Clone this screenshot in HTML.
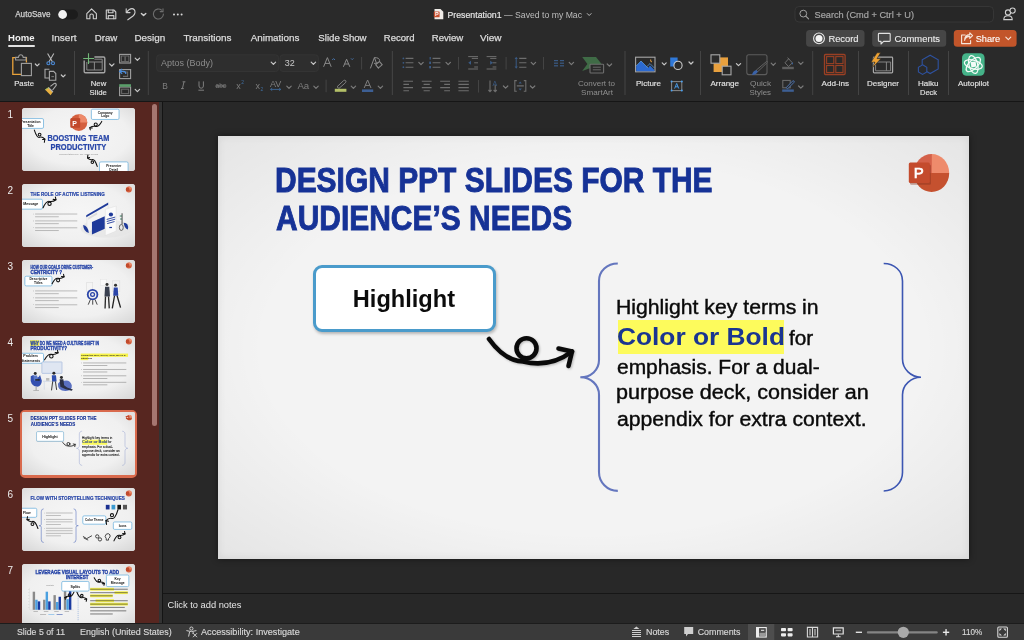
<!DOCTYPE html>
<html><head><meta charset="utf-8">
<style>
*{margin:0;padding:0;box-sizing:border-box}
html,body{width:1024px;height:640px;overflow:hidden;background:#2a2a2a;font-family:"Liberation Sans",sans-serif;position:relative}
body{will-change:transform}
.a{position:absolute;white-space:nowrap}
.t{color:#d6d6d6}
svg{position:absolute;overflow:visible}
#titlebar{left:0;top:0;width:1024px;height:28px;background:#2a2a2a}
#ribbon{left:0;top:47px;width:1024px;height:54px;background:#2a2a2a}
#sidebar{left:0;top:102px;width:159.2px;height:522px;background:#572620}
#canvas{left:163px;top:102px;width:861px;height:491px;background:#282828}
#notes{left:163px;top:594px;width:861px;height:30px;background:#282828}
#status{left:0;top:624px;width:1024px;height:16px;background:#3a3a3a}
.tab{top:32px;font-size:9.8px;color:#d8d8d8;-webkit-text-stroke:0.15px #d8d8d8}
.rl{font-size:8px;color:#dcdcdc;text-align:center}
.dim{color:#8a8a8a}
.sep{position:absolute;width:1px;background:#444}
.chev{position:absolute;width:4px;height:4px;border-right:1.2px solid #bbb;border-bottom:1.2px solid #bbb;transform:rotate(45deg)}
.chev.d{border-color:#777}
.thumb{position:absolute;left:22px;width:113px;height:63px;border-radius:3px;background:#ececec;overflow:hidden}
.num{position:absolute;left:7.6px;font-size:10px;line-height:1;color:#ececec}
</style></head>
<body>
<!-- TITLE BAR -->
<div id="titlebar" class="a"></div>
<svg style="left:0;top:0" width="1024" height="47" font-family="Liberation Sans">
<text x="15.2" y="17" font-size="8.6" fill="#d2d2d2" stroke="#d2d2d2" stroke-width="0.25" textLength="35.3" lengthAdjust="spacingAndGlyphs">AutoSave</text>
<rect x="58" y="9.5" width="20" height="10" rx="5" fill="#1c1c1c"/>
<circle cx="62.6" cy="14.5" r="4.4" fill="#f2f2f2"/>
<g fill="none" stroke="#cfcfcf" stroke-width="1.1" stroke-linejoin="round" stroke-linecap="round">
<path d="M86.8 13.6 L91.6 8.8 L96.4 13.6 L96.4 18.8 L93.3 18.8 L93.3 15.3 Q93.3 14 91.6 14 Q89.9 14 89.9 15.3 L89.9 18.8 L86.8 18.8 Z"/>
<path d="M106.3 10 H113.8 L115.8 12 V18.8 H106.3 Z"/>
<path d="M108.3 10 V12.8 H113 V10"/>
<path d="M108.3 18.8 V15.6 H113.8 V18.8"/>
<path d="M126.2 8.8 V12.6 H130"/>
<path d="M126.6 12.2 Q129.4 8.4 132.2 8.6 Q135.2 9.2 135 12.6 Q134.8 14.4 133 16 L127.8 19.8"/>
<path d="M141.4 13.4 L143.6 15.6 L145.8 13.4" stroke-width="1.4"/>
</g>
<g fill="none" stroke="#6e6e6e" stroke-width="1.1" stroke-linecap="round">
<path d="M163.4 14 A5 5 0 1 1 161.6 10.2"/>
<path d="M163 8.8 V11.6 H160.2"/>
</g>
<g fill="#d8d8d8"><circle cx="174" cy="14.4" r="1"/><circle cx="177.8" cy="14.4" r="1"/><circle cx="181.6" cy="14.4" r="1"/></g>
<path d="M434.5 9 H440.5 L443.3 11.8 V19.2 H434.5 Z" fill="#f0ece8"/>
<rect x="433.8" y="11.5" width="5.8" height="5.8" rx="0.6" fill="#c94f2e"/>
<text x="434.9" y="16.3" font-size="5.5" font-weight="bold" fill="#fff">P</text>
<text x="447.5" y="17.6" font-size="9.5" fill="#e4e4e4" stroke="#e4e4e4" stroke-width="0.2" textLength="54" lengthAdjust="spacingAndGlyphs">Presentation1</text>
<text x="504" y="17.6" font-size="9.5" fill="#bdbdbd" textLength="78" lengthAdjust="spacingAndGlyphs">— Saved to my Mac</text>
<path d="M587 13.3 L589.2 15.5 L591.4 13.3" fill="none" stroke="#bdbdbd" stroke-width="1"/>
<rect x="795" y="6.5" width="198.5" height="15.5" rx="4" fill="#272727" stroke="#3a3a3a" stroke-width="0.8"/>
<circle cx="803.3" cy="13.6" r="3.4" fill="none" stroke="#a0a0a0" stroke-width="1"/>
<path d="M805.8 16.1 L808.6 18.9" stroke="#a0a0a0" stroke-width="1.1" stroke-linecap="round"/>
<text x="814.5" y="17.5" font-size="9.3" fill="#a4a4a4" stroke="#a4a4a4" stroke-width="0.2" textLength="99.5" lengthAdjust="spacingAndGlyphs">Search (Cmd + Ctrl + U)</text>
<g fill="none" stroke="#d0d0d0" stroke-width="1.1">
<circle cx="1008" cy="12.5" r="2.6"/>
<path d="M1003.8 19.6 Q1003.8 15.8 1008 15.8 Q1012.2 15.8 1012.2 19.6 Z"/>
<circle cx="1012.6" cy="10.6" r="2.6" fill="#2a2a2a"/>
</g>
<!-- tabs -->
<g font-size="9.8" fill="#dcdcdc" stroke="#dcdcdc" stroke-width="0.25">
<text x="8" y="40.5" font-weight="bold" fill="#f0f0f0" stroke="none" textLength="26.5" lengthAdjust="spacingAndGlyphs">Home</text>
<text x="51.5" y="40.5" textLength="25" lengthAdjust="spacingAndGlyphs">Insert</text>
<text x="94.7" y="40.5" textLength="22.6" lengthAdjust="spacingAndGlyphs">Draw</text>
<text x="134.5" y="40.5" textLength="30.7" lengthAdjust="spacingAndGlyphs">Design</text>
<text x="183.4" y="40.5" textLength="48" lengthAdjust="spacingAndGlyphs">Transitions</text>
<text x="250.7" y="40.5" textLength="48.7" lengthAdjust="spacingAndGlyphs">Animations</text>
<text x="318.3" y="40.5" textLength="48.3" lengthAdjust="spacingAndGlyphs">Slide Show</text>
<text x="383.8" y="40.5" textLength="30.7" lengthAdjust="spacingAndGlyphs">Record</text>
<text x="431.7" y="40.5" textLength="31.6" lengthAdjust="spacingAndGlyphs">Review</text>
<text x="480" y="40.5" textLength="21.5" lengthAdjust="spacingAndGlyphs">View</text>
</g>
<rect x="8" y="45" width="27" height="2" rx="1" fill="#e2e2e2"/>
<!-- buttons -->
<rect x="806.1" y="30" width="58.4" height="16.8" rx="3.5" fill="#464646"/>
<circle cx="819" cy="38.4" r="5.4" fill="none" stroke="#e8e8e8" stroke-width="1.1"/>
<circle cx="819" cy="38.4" r="3.5" fill="#f4f4f4"/>
<rect x="872.2" y="30" width="74" height="16.8" rx="3.5" fill="#464646"/>
<path d="M879.2 33.4 H889.4 Q890.2 33.4 890.2 34.2 V40.6 Q890.2 41.4 889.4 41.4 H883.6 L881 44 V41.4 H879.2 Q878.4 41.4 878.4 40.6 V34.2 Q878.4 33.4 879.2 33.4 Z" fill="none" stroke="#e0e0e0" stroke-width="1.1" stroke-linejoin="round"/>
<rect x="953.8" y="30" width="62.8" height="16.8" rx="3.5" fill="#c2552a"/>
<g fill="none" stroke="#f6e6dc" stroke-width="1.1" stroke-linejoin="round" stroke-linecap="round">
<path d="M965.2 35 H961.6 V43.6 H970.6 V40.6"/>
<path d="M964.6 40.4 Q965.4 36.4 969.8 36.4 V38.4 L972.6 35.6 L969.8 32.8 V34.6 Q964.6 34.8 964.6 40.4 Z"/>
<path d="M1005.8 37.2 L1008.3 39.7 L1010.8 37.2" stroke="#f6e6dc"/>
</g>
<g font-size="9.6" fill="#ececec" stroke="#ececec" stroke-width="0.12">
<text x="828.4" y="42.4" textLength="30.2" lengthAdjust="spacingAndGlyphs">Record</text>
<text x="894.5" y="42.4" textLength="45.5" lengthAdjust="spacingAndGlyphs">Comments</text>
<text x="975.7" y="42.4" fill="#fff" stroke="#fff" textLength="24.5" lengthAdjust="spacingAndGlyphs">Share</text>
</g>
</svg>

<!-- RIBBON -->
<div id="ribbon" class="a"></div>
<svg style="left:0;top:47px" width="1024" height="54" viewBox="0 47 1024 54" font-family="Liberation Sans">
<!-- separators -->
<g fill="#444">
<rect x="74" y="51" width="1" height="44"/><rect x="147.8" y="51" width="1" height="44"/>
<rect x="391.8" y="51" width="1.1" height="44"/><rect x="624.5" y="51" width="1" height="44"/>
<rect x="700" y="51" width="1" height="44"/><rect x="812.2" y="51" width="1" height="44"/>
<rect x="858" y="51" width="1" height="44"/><rect x="908" y="51" width="1" height="44"/><rect x="948" y="51" width="1" height="44"/>
<rect x="361.1" y="57" width="1" height="12.5"/><rect x="325.6" y="79.7" width="1" height="12.5"/>
<rect x="458" y="57" width="1" height="12.5"/><rect x="505.6" y="57" width="1" height="12.5"/><rect x="543" y="57" width="1" height="12.5"/>
<rect x="478" y="80" width="1" height="12.5"/>
</g>
<!-- chevrons -->
<g fill="none" stroke-width="1.2" stroke-linecap="round" stroke-linejoin="round">
<g stroke="#c8c8c8">
<path d="M35.3 64 L37.2 65.9 L39.1 64"/><path d="M61.3 75 L63.2 76.9 L65.1 75"/>
<path d="M109.6 63.8 L111.8 66 L114 63.8"/><path d="M135.2 58.2 L137.4 60.4 L139.6 58.2"/><path d="M135.2 89.4 L137.4 91.6 L139.6 89.4"/>

<path d="M662.2 62.8 L664.2 64.8 L666.2 62.8"/><path d="M689 62 L691 64 L693 62"/>
<path d="M736.4 63.6 L738.5 65.7 L740.6 63.6"/>
</g>
<g stroke="#7a7a7a">
<path d="M286.8 86.2 L289 88.4 L291.2 86.2"/><path d="M313.8 86.2 L316 88.4 L318.2 86.2"/>
<path d="M351.2 86.2 L353.4 88.4 L355.6 86.2"/><path d="M378.2 86.2 L380.4 88.4 L382.6 86.2"/>
<path d="M418.8 62.4 L421 64.6 L423.2 62.4"/><path d="M446 62.4 L448.2 64.6 L450.4 62.4"/>
<path d="M531.2 62.4 L533.4 64.6 L535.6 62.4"/><path d="M569.2 62.4 L571.4 64.6 L573.6 62.4"/>
<path d="M503.4 86 L505.6 88.2 L507.8 86"/><path d="M530.4 86 L532.6 88.2 L534.8 86"/>
<path d="M607.2 64 L609.4 66.2 L611.6 64"/>
<path d="M771.2 63.2 L773.3 65.3 L775.4 63.2"/>
<path d="M798.6 62.2 L800.8 64.4 L803 62.2"/><path d="M798.6 86 L800.8 88.2 L803 86"/>
</g>
</g>
<!-- Paste -->
<path d="M19 57.6 H12.8 V74.4 H21" fill="none" stroke="#e9a23a" stroke-width="1.3"/>
<path d="M23.4 57.6 H26.4 V62.6" fill="none" stroke="#e9a23a" stroke-width="1.3"/>
<path d="M15.6 60 V57.4 H18.4 Q18.8 54.8 20.8 54.8 Q22.8 54.8 23.2 57.4 H26 V60 Z" fill="#2a2a2a" stroke="#9a9a9a" stroke-width="1.1"/>
<rect x="21.4" y="63.4" width="10" height="12.2" fill="#2a2a2a" stroke="#a0a0a0" stroke-width="1.1"/>
<!-- scissors -->
<g fill="none" stroke-width="1.1"><path d="M47.6 53.4 L52.4 61.8 M53.8 53.4 L49 61.8" stroke="#b8b8b8"/>
<circle cx="48.4" cy="63.2" r="1.5" stroke="#4a8ad8"/><circle cx="53" cy="63.2" r="1.5" stroke="#4a8ad8"/></g>
<!-- copy -->
<g fill="none" stroke="#a8a8a8" stroke-width="1.1"><path d="M49.4 78 H45 V69.2 H49.4"/><path d="M49.4 71.4 H53.6 L55.8 73.6 V80.2 H49.4 Z"/><path d="M51.4 76.6 H54" stroke="#777"/></g>
<!-- brush -->
<path d="M45.2 89.8 L50.6 95.2 L52.8 92 L48.6 87.6 Z" fill="#e8b040"/>
<path d="M48.4 87.4 L53 92 M50.4 86.4 L54 83.6 Q55.6 82.8 56.2 84.2 Q56.6 85.6 55.2 86.6 L52.6 90" fill="none" stroke="#b0b0b0" stroke-width="1.1"/>
<path d="M45.2 89.8 L48.6 87.6" stroke="#9ac060" stroke-width="1"/>
<!-- New slide -->
<path d="M94.4 57 H103.6 Q104.8 57 104.8 58.2 V71.6 Q104.8 72.8 103.6 72.8 H85.4 Q84.2 72.8 84.2 71.6 V60.4" fill="none" stroke="#a4a4a4" stroke-width="1.4"/>
<path d="M86.8 62 V70 H102.2 V59.2 H94.4" fill="none" stroke="#8a8a8a" stroke-width="1"/>
<path d="M88.6 62 H102.2 M94.4 62 V70" fill="none" stroke="#8a8a8a" stroke-width="1"/>
<path d="M88.5 53.2 V64 M83.2 58.5 H94" stroke="#72b878" stroke-width="1.1"/>
<!-- layout / reset / section -->
<g fill="none" stroke="#a0a0a0" stroke-width="1.1">
<rect x="119.6" y="54.4" width="11" height="8.6"/><rect x="121.3" y="56" width="7.6" height="5.4" stroke="#777" stroke-width="0.8"/>
<path d="M125.1 56.4 V61" stroke="#777"/>
<rect x="119.6" y="69.6" width="11" height="9"/><path d="M123 72 H127.6 V76.4 H123" stroke="#666"/>
<rect x="119.6" y="87" width="11" height="8.6"/><rect x="121.6" y="89.2" width="7" height="4.4" stroke="#666"/>
</g>
<path d="M122.2 69 L119.6 71.4 L122.2 73.8 M119.8 71.4 H123.6 Q125.8 71.4 125.8 74" fill="none" stroke="#4a8ad8" stroke-width="1.2"/>
<rect x="119.2" y="84.2" width="11.8" height="2.6" fill="#5a9e6a"/>
<!-- font boxes -->
<rect x="156.6" y="54.8" width="122" height="16.7" rx="3" fill="#2e2e2e" stroke="#363636" stroke-width="0.8"/>
<rect x="280" y="54.8" width="38.4" height="16.7" rx="3" fill="#2e2e2e" stroke="#363636" stroke-width="0.8"/>
<text x="161" y="66" font-size="9" fill="#8c8c8c" textLength="52" lengthAdjust="spacingAndGlyphs">Aptos (Body)</text>
<text x="284.8" y="66" font-size="9" fill="#c8c8c8" textLength="10" lengthAdjust="spacingAndGlyphs">32</text>
<path d="M271.2 62.2 L273.4 64.4 L275.6 62.2 M311.2 62.2 L313.4 64.4 L315.6 62.2" fill="none" stroke="#c8c8c8" stroke-width="1.2" stroke-linecap="round" stroke-linejoin="round"/>
<!-- grow / shrink / clear -->
<g fill="none" stroke="#8a8a8a" stroke-width="1">
<path d="M323.6 66.8 L327.4 57.6 L331.2 66.8 M325 63.4 H329.8"/>
<path d="M343.4 66.8 L346.6 59.2 L349.8 66.8 M344.6 64 H348.6"/>
<path d="M370.4 68.4 L374.4 57.6 L378.4 68.4 M374.4 57.6 Q379.6 57.6 379.6 60.6 Q379.6 63.4 374 63.4"/>
</g>
<path d="M332.2 60 L333.6 58.6 L335 60" fill="none" stroke="#4a7ab8" stroke-width="0.9"/>
<path d="M351 58.4 L352.2 59.6 L353.4 58.4" fill="none" stroke="#4a7ab8" stroke-width="0.9"/>
<rect x="376.4" y="62.6" width="5" height="4.2" transform="rotate(-40 379 64.7)" fill="#2a2a2a" stroke="#8a8a8a" stroke-width="1"/>
<!-- B I U abc x2 -->
<g font-size="9.6" fill="#7e7e7e">
<text x="162.3" y="88.8" textLength="5.6" lengthAdjust="spacingAndGlyphs">B</text>
</g>
<g fill="none" stroke="#7e7e7e" stroke-width="1">
<path d="M182.6 81.8 H185.4 M181 88.6 H183.8 M184 81.8 L182.4 88.6"/>
<path d="M199 81.4 V86 Q199 88.2 201.2 88.2 Q203.4 88.2 203.4 86 V81.4 M198.4 90.2 H204"/>
<path d="M215.4 86 H226.4"/>
</g>
<text x="215.6" y="88.4" font-size="7.4" fill="#7e7e7e" textLength="10.4" lengthAdjust="spacingAndGlyphs">abc</text>
<text x="236.2" y="88.6" font-size="9" fill="#7e7e7e">x</text>
<text x="241.2" y="83.6" font-size="5" fill="#3e6a9a">2</text>
<text x="255.4" y="88.6" font-size="9" fill="#7e7e7e">x</text>
<text x="260.4" y="91.4" font-size="5" fill="#3e6a9a">2</text>
<text x="270" y="87.4" font-size="9.4" fill="#7e7e7e" textLength="11.4" lengthAdjust="spacingAndGlyphs">AV</text>
<path d="M270.6 89.4 H280.8 M272.2 88.2 L270.6 89.4 L272.2 90.6 M279.2 88.2 L280.8 89.4 L279.2 90.6" fill="none" stroke="#3e6a9a" stroke-width="0.9"/>
<text x="297.4" y="88.8" font-size="9.4" fill="#7e7e7e" textLength="11.8" lengthAdjust="spacingAndGlyphs">Aa</text>
<path d="M337 86.8 L343.6 80.6 Q345 79.6 345.8 80.8 Q346.4 81.8 345.4 82.8 L339 88.4 Z" fill="none" stroke="#7e7e7e" stroke-width="1"/>
<rect x="334.8" y="88.8" width="11.6" height="3" fill="#b4c068"/>
<path d="M364.2 88 L367.6 80 L371 88 M365.4 85.4 H369.8" fill="none" stroke="#7e7e7e" stroke-width="1"/>
<rect x="362" y="89.4" width="11.2" height="2.6" fill="#3d5f94"/>
<!-- paragraph -->
<g fill="none" stroke="#6e6e6e" stroke-width="1.1">
<path d="M405.6 58.4 H413.4 M405.6 62.8 H413.4 M405.6 67.2 H413.4"/>
<path d="M432.6 58.4 H440.4 M432.6 62.8 H440.4 M432.6 67.2 H440.4"/>
<path d="M471.8 58.4 H478 M474.2 62.8 H478 M474.2 67 H478 M468.2 69 H478 M468.2 56.6 H478" stroke-width="1"/>
<path d="M490.2 58.4 H496.4 M492.6 62.8 H496.4 M492.6 67 H496.4 M486.6 69 H496.4 M486.6 56.6 H496.4" stroke-width="1"/>
<path d="M519.2 58.4 H526.4 M519.2 62.8 H526.4 M519.2 67.2 H526.4"/>
<path d="M403.4 81.2 H413 M403.4 84.4 H409 M403.4 87.6 H413 M403.4 90.8 H409"/>
<path d="M421.8 81.2 H431.6 M423.6 84.4 H429.8 M421.8 87.6 H431.6 M423.6 90.8 H429.8"/>
<path d="M440.2 81.2 H450 M444.2 84.4 H450 M440.2 87.6 H450 M444.2 90.8 H450"/>
<path d="M458.4 81.2 H468.8 M458.4 84.4 H468.8 M458.4 87.6 H468.8 M458.4 90.8 H468.8"/>
<path d="M490 80.4 V91.6 M488.4 90 L490 91.6 L491.6 90 M495.2 85 V91.6 M493.6 90 L495.2 91.6 L496.8 90"/>
<path d="M516.8 80.6 H514.8 V91.2 H516.8 M523.8 80.6 H525.8 V91.2 H523.8 M516.8 85.9 H523.8"/>
</g>
<g fill="#3a5a84">
<circle cx="403.4" cy="58.4" r="0.9"/><circle cx="403.4" cy="62.8" r="0.9"/><circle cx="403.4" cy="67.2" r="0.9"/>
<rect x="429.6" y="57" width="1.2" height="2.6"/><rect x="429.2" y="61.6" width="1.8" height="2.4"/><rect x="429.2" y="66" width="1.8" height="2.4"/>
<path d="M468.2 62.8 L471 60.8 V64.8 Z"/><path d="M490.2 60.8 L493 62.8 L490.2 64.8 Z"/>
<path d="M516.2 56.8 L514.6 59 H517.8 Z M516.2 68.8 L514.6 66.6 H517.8 Z"/><rect x="515.7" y="58.6" width="1" height="8.4"/>
<rect x="554" y="60" width="4" height="1.2"/><rect x="554" y="62.6" width="4" height="1.2"/><rect x="554" y="65.2" width="4" height="1.2"/>
<rect x="560" y="60" width="4" height="1.2"/><rect x="560" y="62.6" width="4" height="1.2"/><rect x="560" y="65.2" width="4" height="1.2"/>
<path d="M520.2 81.4 L518.6 83.4 H521.8 Z M520.2 90.6 L518.6 88.6 H521.8 Z"/>
</g>
<text x="492.6" y="85.8" font-size="7" fill="#3a5a84">A</text>
<!-- SmartArt -->
<path d="M582.2 57 H596 L601.6 64 L596 66 L582.2 71 L587.4 64 Z" fill="#3f6b46"/>
<rect x="590" y="64.2" width="13.6" height="8.8" rx="0.8" fill="#2a2a2a" stroke="#6e6e6e" stroke-width="1.1"/>
<path d="M592.8 67.2 H600.8 M592.8 69.8 H600.8" stroke="#6e6e6e" stroke-width="0.9"/>
<!-- Picture -->
<rect x="635.6" y="57.2" width="19.4" height="14.6" fill="#2a2a2a" stroke="#a8a8a8" stroke-width="1.1"/>
<path d="M636.2 71.2 V66 L641 61 L648 68 L650 65.6 L654.4 70 V71.2 Z" fill="#2c6ad0"/>
<path d="M636.2 66 L641 61 L648 68 M646.6 66.8 L650 63.6 L654.4 68" fill="none" stroke="#5aa0e8" stroke-width="0.7"/>
<path d="M650.8 59.4 Q650 61 651.8 62" fill="none" stroke="#e09a3a" stroke-width="1.1"/>
<!-- shapes -->
<path d="M670.2 57.4 H677.6 V61 Q673.8 62.6 673.8 66.4 H670.2 Z" fill="#2f78d8"/>
<circle cx="678" cy="65.4" r="4.1" fill="none" stroke="#c8c8c8" stroke-width="1.1"/>
<!-- textbox -->
<rect x="671.6" y="81.6" width="10.2" height="9" fill="none" stroke="#8a8a8a" stroke-width="1"/>
<g fill="#4aa0f0"><circle cx="671.6" cy="81.6" r="1"/><circle cx="681.8" cy="81.6" r="1"/><circle cx="671.6" cy="90.6" r="1"/><circle cx="681.8" cy="90.6" r="1"/></g>
<path d="M674.6 88.6 L676.7 83.4 L678.8 88.6 M675.4 86.8 H678" fill="none" stroke="#4aa0f0" stroke-width="0.9"/>
<!-- arrange -->
<rect x="713.6" y="57.4" width="14.4" height="14.6" fill="#e8a03e"/>
<rect x="711" y="54.8" width="8.8" height="8.4" fill="#2a2a2a" stroke="#a8a8a8" stroke-width="1.1"/>
<rect x="722.2" y="66.2" width="8.8" height="8.6" fill="#2a2a2a" stroke="#a8a8a8" stroke-width="1.1"/>
<!-- quick styles -->
<rect x="746.8" y="54.8" width="20.2" height="19.8" rx="2" fill="none" stroke="#5c5c5c" stroke-width="1.1"/>
<path d="M756.2 70.2 L766.4 61.6 Q767.8 61 767.2 62.6 L757.6 71.8 Z" fill="#2a2a2a" stroke="#6a6a6a" stroke-width="0.9"/>
<path d="M752 75 Q752.6 71.2 756.4 70 L757.8 71.6 Q756.6 75 752 75 Z" fill="#3a62a8"/>
<!-- fill / outline -->
<g fill="none" stroke="#6e6e6e" stroke-width="1"><path d="M785 62.8 L788.6 58.8 L792.4 62.8 L788.6 66.6 Z"/><path d="M787.6 57.6 L789.4 59.6"/></g>
<rect x="782.2" y="66.8" width="11.6" height="2.4" fill="#5e5e5e"/>
<path d="M791.8 62 L793.2 64 L792 64.6 Z" fill="#3a6ab0"/>
<rect x="782.8" y="80.4" width="7.4" height="7.4" fill="none" stroke="#6e6e6e" stroke-width="1"/>
<path d="M786.2 87.6 L792.4 81.2 Q793.4 80.4 794 81 Q794.6 81.8 793.8 82.6 L787.6 88.8 Z" fill="#2a2a2a" stroke="#4a72b0" stroke-width="1"/>
<rect x="782.2" y="89.4" width="11.6" height="2.4" fill="#3d5f94"/>
<!-- add-ins -->
<rect x="824.5" y="54.5" width="20.6" height="20" rx="1" fill="none" stroke="#9a4024" stroke-width="1.3"/>
<g fill="none" stroke="#9a4024" stroke-width="1.1"><rect x="826.6" y="56.6" width="7.2" height="7"/><rect x="835.8" y="56.6" width="7.2" height="7"/><rect x="826.6" y="65.5" width="7.2" height="7"/><rect x="835.8" y="65.5" width="7.2" height="7"/></g>
<!-- designer -->
<rect x="873.4" y="57.2" width="19.2" height="15.6" rx="0.8" fill="none" stroke="#a8a8a8" stroke-width="1.2"/>
<path d="M875.6 62 H890.6 V70.8 H875.6 Z M886.4 62 V70.8" fill="none" stroke="#8c8c8c" stroke-width="0.9"/>
<path d="M877 52.8 L871 62.2 H875 L871.6 68.6 L881 58.6 H877 L880.6 52.8 Z" fill="#eea232" stroke="#2a2a2a" stroke-width="0.6"/>
<!-- haiku -->
<g fill="none" stroke="#2e52a0" stroke-width="1.1">
<path d="M930.2 55.2 L938.2 59.8 V69 L930.2 73.6 L922.2 69 V59.8 Z"/>
<path d="M922.6 64.8 L926.8 67.2 V72 L922.6 74.4 L918.4 72 V67.2 Z" fill="#2a2a2a"/>
</g>
<!-- autopilot -->
<rect x="962" y="53.2" width="22.6" height="22.6" rx="4.5" fill="#45b389"/>
<g fill="none" stroke="#f4fbf7" stroke-width="1.3">
<ellipse cx="973.3" cy="64.5" rx="9.2" ry="4.3" transform="rotate(15 973.3 64.5)"/>
<ellipse cx="973.3" cy="64.5" rx="9.2" ry="4.3" transform="rotate(75 973.3 64.5)"/>
<ellipse cx="973.3" cy="64.5" rx="9.2" ry="4.3" transform="rotate(135 973.3 64.5)"/>
</g>
<path d="M970.6 62 L975.6 61.6 L976.4 66.6 L971.4 67.4 Z" fill="#f4fbf7"/>
<!-- labels -->
<g font-size="8" fill="#e2e2e2" stroke="#e2e2e2" stroke-width="0.15">
<text x="14.2" y="86" textLength="19.8" lengthAdjust="spacingAndGlyphs">Paste</text>
<text x="90.8" y="86" textLength="15.4" lengthAdjust="spacingAndGlyphs">New</text>
<text x="89.6" y="94.7" textLength="17.3" lengthAdjust="spacingAndGlyphs">Slide</text>
<text x="636" y="86" textLength="25" lengthAdjust="spacingAndGlyphs">Picture</text>
<text x="710.5" y="86" textLength="28.5" lengthAdjust="spacingAndGlyphs">Arrange</text>
<text x="821.5" y="86" textLength="27.5" lengthAdjust="spacingAndGlyphs">Add-ins</text>
<text x="867" y="86" textLength="32" lengthAdjust="spacingAndGlyphs">Designer</text>
<text x="918" y="86" textLength="20.5" lengthAdjust="spacingAndGlyphs">Haiku</text>
<text x="920" y="94.7" textLength="17" lengthAdjust="spacingAndGlyphs">Deck</text>
<text x="958" y="86" textLength="31" lengthAdjust="spacingAndGlyphs">Autopilot</text>
</g>
<g font-size="8" fill="#8e8e8e">
<text x="578" y="86" textLength="37" lengthAdjust="spacingAndGlyphs">Convert to</text>
<text x="581" y="94.7" textLength="32" lengthAdjust="spacingAndGlyphs">SmartArt</text>
<text x="750" y="86" textLength="21" lengthAdjust="spacingAndGlyphs">Quick</text>
<text x="749.5" y="94.7" textLength="21.5" lengthAdjust="spacingAndGlyphs">Styles</text>
</g>
</svg>
<div class="a" style="left:0;top:101px;width:1024px;height:1px;background:#161616"></div>

<!-- SIDEBAR -->
<div id="sidebar" class="a"></div>
<div class="a" style="left:159.2px;top:102px;width:2.8px;height:522px;background:#333"></div>
<div class="a" style="left:162px;top:102px;width:1px;height:522px;background:#141414"></div>
<div class="a" style="left:151.5px;top:104px;width:5.5px;height:322px;border-radius:3px;background:#a57670"></div>

<!-- CANVAS -->
<div id="canvas" class="a"></div>
<div class="a" style="left:163px;top:593px;width:861px;height:1px;background:#161616"></div>
<div id="notes" class="a"></div>
<div class="a" style="left:167.5px;top:599.5px;font-size:9.3px;color:#e6e6e6">Click to add notes</div>

<!-- SLIDE -->
<div class="a" style="left:218px;top:136px;width:751px;height:423px;background:#f3f3f3;overflow:hidden;box-shadow:0 0 7px rgba(0,0,0,0.45)">
<div class="a" style="left:0;top:0;width:751px;height:423px;box-shadow:inset 0 0 9px rgba(0,0,0,0.08);background:radial-gradient(ellipse at 50% 50%,rgba(0,0,0,0) 62%,rgba(0,0,0,0.06) 100%);z-index:0"></div>
<div class="a" style="left:-218px;top:-136px;width:1024px;height:640px">
<div class="a" style="left:275.4px;top:162.8px;font-size:34.5px;line-height:1;font-weight:bold;color:#163296;-webkit-text-stroke:0.9px #163296;transform:scaleX(0.868);transform-origin:0 0">DESIGN PPT SLIDES FOR THE</div>
<div class="a" style="left:275.9px;top:200.5px;font-size:34.5px;line-height:1;font-weight:bold;color:#163296;-webkit-text-stroke:0.9px #163296;transform:scaleX(0.868);transform-origin:0 0">AUDIENCE’S NEEDS</div>
<div class="a" style="left:313px;top:265px;width:183px;height:67px;border:3px solid #4a9bcb;border-radius:9px;background:#fff;box-shadow:1px 2px 3px rgba(0,0,0,0.25)"></div>
<div class="a" style="left:352.8px;top:287.5px;font-size:23.6px;line-height:1;font-weight:bold;color:#0c0c0c">Highlight</div>
<svg style="left:0;top:0" width="1024" height="640">
<path d="M617.8 263.5 C607 263.5 599 271 599 281 L599 360 C599 370 591 377.3 580.3 377.3 C591 377.3 599 385 599 394.7 L599 472.2 C599 482 607 490.9 617.8 490.9" fill="none" stroke="#6476be" stroke-width="2.1"/>
<path d="M883.7 263.5 C894.5 263.5 902.5 271 902.5 281 L902.5 359 C902.5 369 911 377.2 921 377.2 C911 377.2 902.5 385 902.5 394.7 L902.5 472.5 C902.5 482 894.5 491 883.7 491" fill="none" stroke="#3c56b2" stroke-width="1.6"/>
<g fill="none" stroke="#0a0a0a" stroke-width="4.6" stroke-linecap="round" stroke-linejoin="round" style="filter:drop-shadow(1px 1px 1px rgba(0,0,0,0.25))">
<path d="M489 339 C499 353 510 361 523 361.5 C541 366 558 362 572 351.5"/>
<circle cx="526.5" cy="348.3" r="10"/>
<path d="M558.5 348.5 L572 351.5 L568.5 366"/>
</g>
</svg>
<div class="a" style="left:617.5px;top:320px;width:166.2px;height:34px;background:#fdfb5c"></div>
<div class="a" style="left:615.6px;top:297.6px;font-size:19.5px;line-height:1;color:#0a0a0a;-webkit-text-stroke:0.4px #0a0a0a;transform:scaleX(1.087);transform-origin:0 0">Highlight key terms in</div>
<div class="a" style="left:616.8px;top:325.3px;font-size:24.6px;line-height:1;font-weight:bold;color:#1a3591;transform:scaleX(1.069);transform-origin:0 0">Color or Bold</div>
<div class="a" style="left:788.5px;top:329.1px;font-size:19.5px;line-height:1;color:#0a0a0a;-webkit-text-stroke:0.4px #0a0a0a;transform:scaleX(1.066);transform-origin:0 0">for</div>
<div class="a" style="left:616.6px;top:358.1px;font-size:19.5px;line-height:1;color:#0a0a0a;-webkit-text-stroke:0.4px #0a0a0a;transform:scaleX(1.075);transform-origin:0 0">emphasis. For a dual-</div>
<div class="a" style="left:615.6px;top:383.2px;font-size:19.5px;line-height:1;color:#0a0a0a;-webkit-text-stroke:0.4px #0a0a0a;transform:scaleX(1.105);transform-origin:0 0">purpose deck, consider an</div>
<div class="a" style="left:616.6px;top:409.6px;font-size:19.5px;line-height:1;color:#0a0a0a;-webkit-text-stroke:0.4px #0a0a0a;transform:scaleX(1.086);transform-origin:0 0">appendix for extra context.</div>
<svg style="left:0;top:0" width="1024" height="640">
<defs><clipPath id="pc"><ellipse cx="931.6" cy="173" rx="17.6" ry="19"/></clipPath></defs>
<g clip-path="url(#pc)">
<rect x="912" y="153" width="20" height="20" fill="#d4614a"/>
<rect x="931.8" y="153" width="20" height="20" fill="#ee8b6c"/>
<rect x="912" y="173" width="40" height="20" fill="#c5512f"/>
</g>
<rect x="910" y="164.5" width="21" height="20.3" rx="1.5" fill="#8a3420" opacity="0.45"/>
<rect x="908.8" y="162.6" width="21" height="20.3" rx="1.5" fill="#c44b2d"/>
<text x="913.8" y="178.2" font-family="Liberation Sans" font-size="15" fill="#fff" stroke="#fff" stroke-width="0.6">P</text>
</svg>


</div></div>

<svg width="0" height="0" style="position:absolute"><defs><radialGradient id="tbg" cx="50%" cy="45%" r="75%"><stop offset="0" stop-color="#f6f6f6"/><stop offset="0.6" stop-color="#f0f0f0"/><stop offset="1" stop-color="#d6d6d6"/></radialGradient></defs></svg><div class="thumb" style="top:108px;"><svg width="113" height="63" viewBox="0 0 751 423" preserveAspectRatio="none" style="position:absolute;left:0;top:0" font-family="Liberation Sans"><rect width="751" height="423" fill="url(#tbg)"/><circle cx="377.5" cy="97.7" r="56.5" fill="#d4603f"/><path d="M377.5 41.2 A56.5 56.5 0 0 1 434.0 97.7 H377.5 Z" fill="#ee8a6a"/><rect x="323.825" y="69.45" width="62.150000000000006" height="59.325" rx="2" fill="#c04a2c"/><rect x="322" y="70" width="64" height="62" rx="5" fill="#c2492b"/><text x="334" y="120" font-size="46" font-weight="bold" fill="#fff">P</text><rect x="461" y="8" width="184" height="69" rx="9" fill="#fff" stroke="#6ab0dc" stroke-width="5"/><text x="553.0" y="37.55" font-size="22" font-weight="bold" fill="#111" text-anchor="middle">Company</text><text x="553.0" y="62.849999999999994" font-size="22" font-weight="bold" fill="#111" text-anchor="middle">Logo</text><rect x="-30" y="71" width="173" height="66" rx="9" fill="#fff" stroke="#6ab0dc" stroke-width="5"/><text x="56.5" y="99.05" font-size="22" font-weight="bold" fill="#111" text-anchor="middle">Presentation</text><text x="56.5" y="124.35" font-size="22" font-weight="bold" fill="#111" text-anchor="middle">Title</text><g fill="none" stroke="#111" stroke-width="7" stroke-linecap="round" stroke-linejoin="round"><path d="M82 148 Q99.5 202.9 117.0 196.8 T152 209"/><circle cx="117.0" cy="178.5" r="9.1"/><path d="M136.6 212.05 L152 209 L148.5 230.35"/></g><g fill="none" stroke="#111" stroke-width="7" stroke-linecap="round" stroke-linejoin="round"><path d="M530 90 Q510.0 127.80000000000001 490.0 123.6 T450 132"/><circle cx="490.0" cy="111.0" r="10.4"/><path d="M467.6 134.1 L450 132 L454.0 146.7"/></g><g fill="none" stroke="#111" stroke-width="7" stroke-linecap="round" stroke-linejoin="round"><path d="M500 392 Q483.75 340.7 467.5 346.4 T435 335"/><circle cx="467.5" cy="363.5" r="8.450000000000001"/><path d="M449.3 332.15 L435 335 L438.25 315.05"/></g><rect x="515" y="362" width="190" height="78" rx="9" fill="#fff" stroke="#6ab0dc" stroke-width="5"/><text x="610.0" y="396.05" font-size="22" font-weight="bold" fill="#111" text-anchor="middle">Presenter</text><text x="610.0" y="421.35" font-size="22" font-weight="bold" fill="#111" text-anchor="middle">Detail</text><text x="170" y="220" font-size="60" font-weight="bold" fill="#2846a8" stroke="#2846a8" stroke-width="1.6" textLength="410" lengthAdjust="spacingAndGlyphs">BOOSTING TEAM</text><text x="189" y="282" font-size="60" font-weight="bold" fill="#2846a8" stroke="#2846a8" stroke-width="1.6" textLength="371" lengthAdjust="spacingAndGlyphs">PRODUCTIVITY</text><text x="247" y="317" font-size="14" fill="#888" textLength="259" lengthAdjust="spacingAndGlyphs">Presentation by: Mr. John Lewis</text></svg></div>
<div class="num" style="top:109.6px">1</div>
<div class="thumb" style="top:184px;"><svg width="113" height="63" viewBox="0 0 751 423" preserveAspectRatio="none" style="position:absolute;left:0;top:0" font-family="Liberation Sans"><rect width="751" height="423" fill="url(#tbg)"/><circle cx="710" cy="36.5" r="20" fill="#d4603f"/><path d="M710 16.5 A20 20 0 0 1 730 36.5 H710 Z" fill="#ee8a6a"/><rect x="691.0" y="26.5" width="22.0" height="21.0" rx="2" fill="#c04a2c"/><text x="57" y="80" font-size="40" font-weight="bold" fill="#2846a8" stroke="#2846a8" stroke-width="1.6" textLength="493" lengthAdjust="spacingAndGlyphs">THE ROLE OF ACTIVE LISTENING</text><rect x="-40" y="102" width="176" height="67" rx="9" fill="#fff" stroke="#6ab0dc" stroke-width="5"/><text x="48.0" y="143.9" font-size="24" font-weight="bold" fill="#111" text-anchor="middle">y Message</text><g fill="none" stroke="#111" stroke-width="7" stroke-linecap="round" stroke-linejoin="round"><path d="M140 160 Q161.5 111.4 183.0 116.8 T226 106"/><circle cx="183.0" cy="133.0" r="11.18"/><path d="M207.07999999999998 103.3 L226 106 L221.7 87.1"/></g><circle cx="77" cy="201.34" r="2.2" fill="#777"/><rect x="87" y="198.56" width="280.28" height="5.930666666666667" fill="#888" opacity="0.6"/><rect x="87" y="217.09333333333333" width="157.3" height="5.930666666666667" fill="#888" opacity="0.6"/><circle cx="77" cy="247.67333333333335" r="2.2" fill="#777"/><rect x="87" y="244.89333333333335" width="280.28" height="5.930666666666667" fill="#888" opacity="0.6"/><rect x="87" y="263.4266666666667" width="157.3" height="5.930666666666667" fill="#888" opacity="0.6"/><circle cx="77" cy="294.00666666666666" r="2.2" fill="#777"/><rect x="87" y="291.2266666666667" width="280.28" height="5.930666666666667" fill="#888" opacity="0.6"/><rect x="87" y="309.76000000000005" width="157.3" height="5.930666666666667" fill="#888" opacity="0.6"/><g>
<ellipse cx="560" cy="300" rx="170" ry="60" fill="#e4e4e4" opacity="0.7"/>
<path d="M431 217 L572 136 L572 251 L431 331 Z" fill="#f4f4f4" stroke="#d8d8d8" stroke-width="3"/>
<path d="M427 209 L573 124 L573 140 L427 224 Z" fill="#1f3a9a"/>
<path d="M440 225 L500 190 L500 205 L440 240 Z" fill="#ddd"/>
<path d="M465 255 L550 217 L550 300 L465 339 Z" fill="#1f3a9a"/>
<path d="M554 170 L626 148 L626 316 L554 346 Z" fill="#fafafa" stroke="#dcdcdc" stroke-width="3"/>
<circle cx="591" cy="205" r="14" fill="#1f3a9a"/>
<path d="M563 238 L620 222 M563 252 L620 236 M566 266 L615 252" stroke="#1f3a9a" stroke-width="6"/>
<rect x="580" y="288" width="18" height="8" fill="#1f3a9a"/>
<path d="M406 275 Q440 280 444 329 Q410 320 406 275 Z" fill="#1f3a9a"/>
<path d="M665 197 V272" stroke="#555" stroke-width="7"/><path d="M665 215 H650 M665 235 H652" stroke="#2a6a50" stroke-width="6"/>
<ellipse cx="660" cy="292" rx="13" ry="20" fill="none" stroke="#555" stroke-width="6"/>
<path d="M676 260 Q712 262 704 306 Q680 300 676 260 Z" fill="#1f3a9a"/>
</g></svg></div>
<div class="num" style="top:185.6px">2</div>
<div class="thumb" style="top:260px;"><svg width="113" height="63" viewBox="0 0 751 423" preserveAspectRatio="none" style="position:absolute;left:0;top:0" font-family="Liberation Sans"><rect width="751" height="423" fill="url(#tbg)"/><circle cx="710" cy="36.5" r="20" fill="#d4603f"/><path d="M710 16.5 A20 20 0 0 1 730 36.5 H710 Z" fill="#ee8a6a"/><rect x="691.0" y="26.5" width="22.0" height="21.0" rx="2" fill="#c04a2c"/><text x="57" y="60" font-size="38" font-weight="bold" fill="#2846a8" stroke="#2846a8" stroke-width="2.6" textLength="415" lengthAdjust="spacingAndGlyphs">HOW OUR GOALS DRIVE CUSTOMER-</text><text x="57" y="94" font-size="38" font-weight="bold" fill="#2846a8" stroke="#2846a8" stroke-width="2.6" textLength="209" lengthAdjust="spacingAndGlyphs">CENTRICITY ?</text><rect x="19" y="109" width="180" height="65" rx="9" fill="#fff" stroke="#6ab0dc" stroke-width="5"/><text x="109.0" y="136.54999999999998" font-size="22" font-weight="bold" fill="#111" text-anchor="middle">Descriptive</text><text x="109.0" y="161.84999999999997" font-size="22" font-weight="bold" fill="#111" text-anchor="middle">Titles</text><g fill="none" stroke="#111" stroke-width="7" stroke-linecap="round" stroke-linejoin="round"><path d="M200 160 Q220.0 117.69999999999999 240.0 122.4 T280 113"/><circle cx="240.0" cy="136.5" r="10.4"/><path d="M262.4 110.65 L280 113 L276.0 96.55"/></g><circle cx="77" cy="207.4" r="2.2" fill="#777"/><rect x="87" y="204.6" width="280.28" height="5.973333333333334" fill="#888" opacity="0.6"/><rect x="87" y="223.26666666666665" width="157.3" height="5.973333333333334" fill="#888" opacity="0.6"/><circle cx="77" cy="254.06666666666666" r="2.2" fill="#777"/><rect x="87" y="251.26666666666665" width="280.28" height="5.973333333333334" fill="#888" opacity="0.6"/><rect x="87" y="269.93333333333334" width="157.3" height="5.973333333333334" fill="#888" opacity="0.6"/><circle cx="77" cy="300.7333333333333" r="2.2" fill="#777"/><rect x="87" y="297.93333333333334" width="280.28" height="5.973333333333334" fill="#888" opacity="0.6"/><rect x="87" y="316.6" width="157.3" height="5.973333333333334" fill="#888" opacity="0.6"/><g>
<rect x="430" y="150" width="40" height="60" fill="none" stroke="#ddd" stroke-width="4"/><rect x="520" y="130" width="40" height="40" fill="#fafafa" stroke="#e0e0e0" stroke-width="3"/><rect x="600" y="140" width="50" height="70" fill="none" stroke="#ddd" stroke-width="4"/>
<circle cx="469" cy="232" r="38" fill="#2a44a8"/><circle cx="469" cy="232" r="26" fill="#f0f0f0"/><circle cx="469" cy="232" r="17" fill="#2a44a8"/><circle cx="469" cy="232" r="8" fill="#f0f0f0"/>
<path d="M440 300 L455 265 M500 300 L485 265 M470 300 L470 270" stroke="#333" stroke-width="6"/>
<circle cx="565" cy="165" r="10" fill="#333"/><path d="M552 180 H580 L585 245 H548 Z" fill="#3a4050"/><path d="M555 245 L552 325 M575 245 L580 325" stroke="#2a2a2a" stroke-width="9"/>
<circle cx="622" cy="170" r="10" fill="#333"/><path d="M610 185 H636 L640 240 H606 Z" fill="#2a44a8"/><path d="M615 240 L600 325 M632 240 L655 320" stroke="#222" stroke-width="9"/>
</g></svg></div>
<div class="num" style="top:261.6px">3</div>
<div class="thumb" style="top:336px;"><svg width="113" height="63" viewBox="0 0 751 423" preserveAspectRatio="none" style="position:absolute;left:0;top:0" font-family="Liberation Sans"><rect width="751" height="423" fill="url(#tbg)"/><circle cx="710" cy="36.5" r="20" fill="#d4603f"/><path d="M710 16.5 A20 20 0 0 1 730 36.5 H710 Z" fill="#ee8a6a"/><rect x="691.0" y="26.5" width="22.0" height="21.0" rx="2" fill="#c04a2c"/><rect x="54" y="28" width="60" height="38" fill="#f6f24a"/><text x="57" y="63" font-size="38" font-weight="bold" fill="#2846a8" stroke="#2846a8" stroke-width="2.6" textLength="455" lengthAdjust="spacingAndGlyphs">WHY DO WE NEED A CULTURE SHIFT IN</text><text x="57" y="96" font-size="38" font-weight="bold" fill="#2846a8" stroke="#2846a8" stroke-width="2.6" textLength="242" lengthAdjust="spacingAndGlyphs">PRODUCTIVITY?</text><rect x="-30" y="116" width="173" height="67" rx="9" fill="#fff" stroke="#6ab0dc" stroke-width="5"/><text x="56.5" y="144.1" font-size="24" font-weight="bold" fill="#111" text-anchor="middle">Problem</text><text x="56.5" y="171.7" font-size="24" font-weight="bold" fill="#111" text-anchor="middle">Statements</text><g fill="none" stroke="#111" stroke-width="7" stroke-linecap="round" stroke-linejoin="round"><path d="M150 160 Q172.5 117.69999999999999 195.0 122.4 T240 113"/><circle cx="195.0" cy="136.5" r="11.700000000000001"/><path d="M220.2 110.65 L240 113 L235.5 96.55"/></g><rect x="132" y="174" width="134" height="77" rx="4" fill="#dfe6f2" stroke="#9ab0d8" stroke-width="4"/><g>
<path d="M58 270 Q50 335 100 340 Q130 338 132 300 L120 262 Q100 300 75 262 Z" fill="#3550b0"/>
<rect x="90" y="340" width="8" height="26" fill="#aaa"/><rect x="75" y="364" width="38" height="5" fill="#aaa"/>
<circle cx="88" cy="252" r="10" fill="#2a2a2a"/><path d="M75 265 H100 L108 300 H80 Z" fill="#5a78c8"/><rect x="88" y="290" width="30" height="10" fill="#222"/>
<rect x="140" y="300" width="80" height="7" fill="#cfd8e6"/><path d="M148 307 V360 M212 307 V360" stroke="#cfd8e6" stroke-width="5"/>
<rect x="160" y="282" width="22" height="18" fill="#bbb"/>
<circle cx="212" cy="250" r="10" fill="#2a2a2a"/><path d="M198 263 H226 L230 305 H200 Z" fill="#2f4fb0"/><path d="M204 305 L196 365 M222 305 L230 362" stroke="#444" stroke-width="7"/>
<path d="M239 320 Q236 370 290 369 Q335 366 331 330 Q320 292 280 300 Q250 300 239 320 Z" fill="#5a70c0"/>
<circle cx="262" cy="278" r="10" fill="#2a2a2a"/><path d="M250 290 H275 L280 330 L300 345 L338 360 L330 368 L290 358 L255 340 Z" fill="#2a2f45"/>
</g><rect x="390" y="118" width="315" height="22" fill="#f6f24a"/><rect x="390" y="140" width="50" height="22" fill="#f6f24a"/><text x="392" y="136" font-size="17" font-weight="bold" fill="#222" textLength="300" lengthAdjust="spacingAndGlyphs">Follow the WHY, WHAT, HOW, WHAT IF</text><text x="392" y="157" font-size="17" font-weight="bold" fill="#222">Structure</text><circle cx="396" cy="180.785" r="2.2" fill="#777"/><rect x="406" y="178.19" width="287.14" height="5.5360000000000005" fill="#777" opacity="0.6"/><rect x="406" y="195.49" width="161.15" height="5.5360000000000005" fill="#777" opacity="0.6"/><circle cx="396" cy="224.03500000000003" r="2.2" fill="#777"/><rect x="406" y="221.44000000000003" width="287.14" height="5.5360000000000005" fill="#777" opacity="0.6"/><rect x="406" y="238.74000000000004" width="161.15" height="5.5360000000000005" fill="#777" opacity="0.6"/><circle cx="396" cy="267.2850000000001" r="2.2" fill="#777"/><rect x="406" y="264.69000000000005" width="287.14" height="5.5360000000000005" fill="#777" opacity="0.6"/><rect x="406" y="281.99000000000007" width="161.15" height="5.5360000000000005" fill="#777" opacity="0.6"/><circle cx="396" cy="310.5350000000001" r="2.2" fill="#777"/><rect x="406" y="307.94000000000005" width="287.14" height="5.5360000000000005" fill="#777" opacity="0.6"/><rect x="406" y="325.24000000000007" width="161.15" height="5.5360000000000005" fill="#777" opacity="0.6"/></svg></div>
<div class="num" style="top:337.6px">4</div>
<div class="a" style="left:19.8px;top:410px;width:117.4px;height:67.6px;border:2.4px solid #d96a4d;border-radius:5px;background:#d96a4d"></div>
<div class="thumb" style="top:412px;top:412.4px;left:22.2px;width:112.8px;height:62.9px;border-radius:2px"><div class="a" style="left:0;top:0;width:751px;height:423px;transform:scale(0.15047);transform-origin:0 0;background:radial-gradient(ellipse at 50% 45%,#f6f6f6 0%,#f0f0f0 60%,#d8d8d8 100%)"><div class="a" style="left:-218px;top:-136px;width:1024px;height:640px"><div class="a" style="left:275.4px;top:162.8px;font-size:34.5px;line-height:1;font-weight:bold;color:#163296;-webkit-text-stroke:0.9px #163296;transform:scaleX(0.868);transform-origin:0 0">DESIGN PPT SLIDES FOR THE</div>
<div class="a" style="left:275.9px;top:200.5px;font-size:34.5px;line-height:1;font-weight:bold;color:#163296;-webkit-text-stroke:0.9px #163296;transform:scaleX(0.868);transform-origin:0 0">AUDIENCE’S NEEDS</div>
<div class="a" style="left:313px;top:265px;width:183px;height:67px;border:3px solid #4a9bcb;border-radius:9px;background:#fff;box-shadow:1px 2px 3px rgba(0,0,0,0.25)"></div>
<div class="a" style="left:352.8px;top:287.5px;font-size:23.6px;line-height:1;font-weight:bold;color:#0c0c0c">Highlight</div>
<svg style="left:0;top:0" width="1024" height="640">
<path d="M617.8 263.5 C607 263.5 599 271 599 281 L599 360 C599 370 591 377.3 580.3 377.3 C591 377.3 599 385 599 394.7 L599 472.2 C599 482 607 490.9 617.8 490.9" fill="none" stroke="#6476be" stroke-width="2.1"/>
<path d="M883.7 263.5 C894.5 263.5 902.5 271 902.5 281 L902.5 359 C902.5 369 911 377.2 921 377.2 C911 377.2 902.5 385 902.5 394.7 L902.5 472.5 C902.5 482 894.5 491 883.7 491" fill="none" stroke="#3c56b2" stroke-width="1.6"/>
<g fill="none" stroke="#0a0a0a" stroke-width="4.6" stroke-linecap="round" stroke-linejoin="round" style="filter:drop-shadow(1px 1px 1px rgba(0,0,0,0.25))">
<path d="M489 339 C499 353 510 361 523 361.5 C541 366 558 362 572 351.5"/>
<circle cx="526.5" cy="348.3" r="10"/>
<path d="M558.5 348.5 L572 351.5 L568.5 366"/>
</g>
</svg>
<div class="a" style="left:617.5px;top:320px;width:166.2px;height:34px;background:#fdfb5c"></div>
<div class="a" style="left:615.6px;top:297.6px;font-size:19.5px;line-height:1;color:#0a0a0a;-webkit-text-stroke:0.4px #0a0a0a;transform:scaleX(1.087);transform-origin:0 0">Highlight key terms in</div>
<div class="a" style="left:616.8px;top:325.3px;font-size:24.6px;line-height:1;font-weight:bold;color:#1a3591;transform:scaleX(1.069);transform-origin:0 0">Color or Bold</div>
<div class="a" style="left:788.5px;top:329.1px;font-size:19.5px;line-height:1;color:#0a0a0a;-webkit-text-stroke:0.4px #0a0a0a;transform:scaleX(1.066);transform-origin:0 0">for</div>
<div class="a" style="left:616.6px;top:358.1px;font-size:19.5px;line-height:1;color:#0a0a0a;-webkit-text-stroke:0.4px #0a0a0a;transform:scaleX(1.075);transform-origin:0 0">emphasis. For a dual-</div>
<div class="a" style="left:615.6px;top:383.2px;font-size:19.5px;line-height:1;color:#0a0a0a;-webkit-text-stroke:0.4px #0a0a0a;transform:scaleX(1.105);transform-origin:0 0">purpose deck, consider an</div>
<div class="a" style="left:616.6px;top:409.6px;font-size:19.5px;line-height:1;color:#0a0a0a;-webkit-text-stroke:0.4px #0a0a0a;transform:scaleX(1.086);transform-origin:0 0">appendix for extra context.</div>
<svg style="left:0;top:0" width="1024" height="640">
<defs><clipPath id="pc2"><ellipse cx="931.6" cy="173" rx="17.6" ry="19"/></clipPath></defs>
<g clip-path="url(#pc2)">
<rect x="912" y="153" width="20" height="20" fill="#d4614a"/>
<rect x="931.8" y="153" width="20" height="20" fill="#ee8b6c"/>
<rect x="912" y="173" width="40" height="20" fill="#c5512f"/>
</g>
<rect x="910" y="164.5" width="21" height="20.3" rx="1.5" fill="#8a3420" opacity="0.45"/>
<rect x="908.8" y="162.6" width="21" height="20.3" rx="1.5" fill="#c44b2d"/>
<text x="913.8" y="178.2" font-family="Liberation Sans" font-size="15" fill="#fff" stroke="#fff" stroke-width="0.6">P</text>
</svg>

</div></div></div>
<div class="num" style="top:413.6px">5</div>
<div class="thumb" style="top:488px;"><svg width="113" height="63" viewBox="0 0 751 423" preserveAspectRatio="none" style="position:absolute;left:0;top:0" font-family="Liberation Sans"><rect width="751" height="423" fill="url(#tbg)"/><circle cx="710" cy="36.5" r="20" fill="#d4603f"/><path d="M710 16.5 A20 20 0 0 1 730 36.5 H710 Z" fill="#ee8a6a"/><rect x="691.0" y="26.5" width="22.0" height="21.0" rx="2" fill="#c04a2c"/><text x="57" y="80" font-size="40" font-weight="bold" fill="#2846a8" stroke="#2846a8" stroke-width="1.6" textLength="626" lengthAdjust="spacingAndGlyphs">FLOW WITH STORYTELLING TECHNIQUES</text><rect x="-60" y="136" width="158" height="61" rx="9" fill="#fff" stroke="#6ab0dc" stroke-width="5"/><text x="19.0" y="174.2" font-size="22" font-weight="bold" fill="#111" text-anchor="middle">al Flow</text><g fill="none" stroke="#111" stroke-width="7" stroke-linecap="round" stroke-linejoin="round"><path d="M106 272 Q87.75 218.9 69.5 224.8 T33 213"/><circle cx="69.5" cy="242.5" r="9.49"/><path d="M49.06 210.05 L33 213 L36.65 192.35"/></g><path d="M144 140 Q128 140 128 160 V245 Q128 253 113 253 Q128 253 128 262 V346 Q128 366 144 366" fill="none" stroke="#5a74c0" stroke-width="4"/><path d="M343 140 Q359 140 359 160 V245 Q359 253 374 253 Q359 253 359 262 V346 Q359 366 343 366" fill="none" stroke="#5a74c0" stroke-width="4"/><circle cx="149" cy="167.67142857142858" r="2.2" fill="#777"/><rect x="159" y="165.1142857142857" width="177.38" height="5.455238095238095" fill="#888" opacity="0.6"/><rect x="159" y="182.16190476190474" width="99.55000000000001" height="5.455238095238095" fill="#888" opacity="0.6"/><circle cx="149" cy="210.29047619047617" r="2.2" fill="#777"/><rect x="159" y="207.7333333333333" width="177.38" height="5.455238095238095" fill="#888" opacity="0.6"/><rect x="159" y="224.78095238095233" width="177.38" height="5.455238095238095" fill="#888" opacity="0.6"/><rect x="159" y="241.82857142857137" width="99.55000000000001" height="5.455238095238095" fill="#888" opacity="0.6"/><circle cx="149" cy="269.9571428571428" r="2.2" fill="#777"/><rect x="159" y="267.3999999999999" width="177.38" height="5.455238095238095" fill="#888" opacity="0.6"/><rect x="159" y="284.44761904761896" width="177.38" height="5.455238095238095" fill="#888" opacity="0.6"/><rect x="159" y="301.495238095238" width="177.38" height="5.455238095238095" fill="#888" opacity="0.6"/><rect x="159" y="318.54285714285703" width="99.55000000000001" height="5.455238095238095" fill="#888" opacity="0.6"/><rect x="557" y="113" width="25" height="31" fill="#1a3090"/><rect x="595" y="113" width="25" height="31" fill="#3a9ad0"/><rect x="634" y="113" width="24" height="31" fill="#111"/><rect x="671" y="113" width="27" height="31" fill="#555"/><rect x="404" y="187" width="153" height="56" rx="9" fill="#fff" stroke="#6ab0dc" stroke-width="5"/><text x="480.5" y="222.0" font-size="20" font-weight="bold" fill="#111" text-anchor="middle">Color Theme</text><g fill="none" stroke="#111" stroke-width="7" stroke-linecap="round" stroke-linejoin="round"><path d="M638 146 Q618.0 211.7 598.0 204.4 T558 219"/><circle cx="598.0" cy="182.5" r="10.4"/><path d="M575.6 222.65 L558 219 L562.0 244.55"/></g><rect x="607" y="228" width="123" height="50" rx="9" fill="#fff" stroke="#6ab0dc" stroke-width="5"/><text x="668.5" y="260.0" font-size="20" font-weight="bold" fill="#111" text-anchor="middle">Icons</text><g fill="none" stroke="#333" stroke-width="6"><path d="M405 325 L430 340 L465 320 M410 335 L440 350"/><circle cx="500" cy="325" r="11"/><circle cx="518" cy="345" r="11"/><path d="M560 350 V340 Q545 325 560 310 Q575 300 585 315 Q590 330 575 340 V350 Z"/></g><g fill="none" stroke="#111" stroke-width="7" stroke-linecap="round" stroke-linejoin="round"><path d="M611 355 Q629.5 312.7 648.0 317.4 T685 308"/><circle cx="648.0" cy="331.5" r="9.620000000000001"/><path d="M668.72 305.65 L685 308 L681.3 291.55"/></g></svg></div>
<div class="num" style="top:489.6px">6</div>
<div class="thumb" style="top:564px;"><svg width="113" height="63" viewBox="0 0 751 423" preserveAspectRatio="none" style="position:absolute;left:0;top:0" font-family="Liberation Sans"><rect width="751" height="423" fill="url(#tbg)"/><circle cx="710" cy="36.5" r="20" fill="#d4603f"/><path d="M710 16.5 A20 20 0 0 1 730 36.5 H710 Z" fill="#ee8a6a"/><rect x="691.0" y="26.5" width="22.0" height="21.0" rx="2" fill="#c04a2c"/><text x="90" y="67" font-size="38" font-weight="bold" fill="#2846a8" stroke="#2846a8" stroke-width="2.6" textLength="555" lengthAdjust="spacingAndGlyphs">LEVERAGE VISUAL LAYOUTS TO ADD</text><text x="292" y="100" font-size="38" font-weight="bold" fill="#2846a8" stroke="#2846a8" stroke-width="2.6" textLength="150" lengthAdjust="spacingAndGlyphs">INTEREST</text><rect x="561" y="74" width="149" height="78" rx="9" fill="#fff" stroke="#6ab0dc" stroke-width="5"/><text x="635.5" y="108.05" font-size="22" font-weight="bold" fill="#111" text-anchor="middle">Key</text><text x="635.5" y="133.35" font-size="22" font-weight="bold" fill="#111" text-anchor="middle">Message</text><g fill="none" stroke="#111" stroke-width="7" stroke-linecap="round" stroke-linejoin="round"><path d="M480 92 Q497.0 126.2 514.0 122.4 T548 130"/><circle cx="514.0" cy="111.0" r="8.84"/><path d="M533.04 131.9 L548 130 L544.6 143.3"/></g><text x="162" y="148" font-size="11" fill="#777">Chart Title</text><path d="M50 160 V308" stroke="#ccc" stroke-width="2"/><rect x="42" y="170" width="6" height="2" fill="#aaa"/><rect x="42" y="190" width="6" height="2" fill="#aaa"/><rect x="42" y="210" width="6" height="2" fill="#aaa"/><rect x="42" y="230" width="6" height="2" fill="#aaa"/><rect x="42" y="250" width="6" height="2" fill="#aaa"/><rect x="42" y="270" width="6" height="2" fill="#aaa"/><rect x="42" y="290" width="6" height="2" fill="#aaa"/><rect x="71" y="186" width="16" height="122" fill="#8a8a8a"/><rect x="88" y="240" width="16" height="68" fill="#4aa0e0"/><rect x="105" y="251" width="16" height="57" fill="#1a3aa0"/><rect x="140" y="240" width="16" height="68" fill="#8a8a8a"/><rect x="157" y="186" width="16" height="122" fill="#4aa0e0"/><rect x="174" y="251" width="16" height="57" fill="#1a3aa0"/><rect x="209" y="209" width="16" height="99" fill="#8a8a8a"/><rect x="226" y="255" width="16" height="53" fill="#4aa0e0"/><rect x="243" y="220" width="16" height="88" fill="#1a3aa0"/><rect x="278" y="170" width="16" height="138" fill="#8a8a8a"/><rect x="295" y="236" width="16" height="72" fill="#4aa0e0"/><rect x="312" y="182" width="16" height="126" fill="#1a3aa0"/><line x1="55" y1="309" x2="345" y2="309" stroke="#ccc" stroke-width="2"/><rect x="76" y="318" width="30" height="4" fill="#999"/><rect x="145" y="318" width="30" height="4" fill="#999"/><rect x="214" y="318" width="30" height="4" fill="#999"/><rect x="283" y="318" width="30" height="4" fill="#999"/><rect x="120" y="336" width="40" height="4" fill="#999"/><rect x="175" y="336" width="40" height="4" fill="#6ab0e8"/><rect x="230" y="336" width="40" height="4" fill="#3a5ab0"/><line x1="373" y1="160" x2="373" y2="380" stroke="#5a8ad0" stroke-width="3" stroke-dasharray="8 6"/><rect x="264" y="117" width="182" height="65" rx="9" fill="#fff" stroke="#6ab0dc" stroke-width="5"/><text x="355.0" y="157.9" font-size="24" font-weight="bold" fill="#111" text-anchor="middle">Splits</text><g fill="none" stroke="#111" stroke-width="7" stroke-linecap="round" stroke-linejoin="round"><path d="M345 190 Q330.0 221.5 315.0 218.0 T285 225"/><circle cx="315.0" cy="207.5" r="7.800000000000001"/><path d="M298.2 226.75 L285 225 L288.0 237.25"/></g><g fill="none" stroke="#111" stroke-width="7" stroke-linecap="round" stroke-linejoin="round"><path d="M365 190 Q381.25 230.5 397.5 226.0 T430 235"/><circle cx="397.5" cy="212.5" r="8.450000000000001"/><path d="M415.7 237.25 L430 235 L426.75 250.75"/></g><rect x="453" y="160" width="158" height="19" fill="#f6f24a"/><rect x="615" y="183" width="88" height="19" fill="#f6f24a"/><rect x="453" y="204" width="150" height="19" fill="#f6f24a"/><rect x="489" y="237" width="122" height="19" fill="#f6f24a"/><rect x="453" y="260" width="250" height="19" fill="#f6f24a"/><rect x="453" y="166" width="250" height="7" fill="#333" opacity="0.6"/><rect x="453" y="189" width="250" height="7" fill="#333" opacity="0.6"/><rect x="453" y="210" width="150" height="7" fill="#333" opacity="0.6"/><rect x="453" y="243" width="250" height="7" fill="#333" opacity="0.6"/><rect x="453" y="266" width="250" height="7" fill="#333" opacity="0.6"/><rect x="453" y="288" width="230" height="7" fill="#333" opacity="0.6"/><rect x="453" y="311" width="240" height="7" fill="#333" opacity="0.6"/><rect x="453" y="332" width="150" height="7" fill="#333" opacity="0.6"/></svg></div>
<div class="num" style="top:565.6px">7</div>

<!-- STATUS -->
<div id="status" class="a"></div>
<div class="a" style="left:0;top:623px;width:1024px;height:1px;background:#1c1c1c"></div>
<svg style="left:0;top:624px" width="1024" height="16" viewBox="0 624 1024 16" font-family="Liberation Sans">
<g font-size="9" fill="#d8d8d8" stroke="#d8d8d8" stroke-width="0.15">
<text x="17" y="635.2" textLength="48" lengthAdjust="spacingAndGlyphs">Slide 5 of 11</text>
<text x="80" y="635.2" textLength="91.7" lengthAdjust="spacingAndGlyphs">English (United States)</text>
<text x="201" y="635.2" textLength="98.7" lengthAdjust="spacingAndGlyphs">Accessibility: Investigate</text>
<text x="646" y="635.2" textLength="23.2" lengthAdjust="spacingAndGlyphs">Notes</text>
<text x="697.7" y="635.2" textLength="42.8" lengthAdjust="spacingAndGlyphs">Comments</text>
<text x="962" y="635.2" textLength="20.2" lengthAdjust="spacingAndGlyphs">110%</text>
</g>
<g fill="none" stroke="#d0d0d0" stroke-width="1">
<circle cx="191.4" cy="628.6" r="1.6"/>
<path d="M186.4 630.6 Q191.4 632.6 196.4 630.6 M189.6 631.8 L188.6 636.6 M193.2 631.8 L193 634"/>
<path d="M193 633.2 L197 637.2 M197 633.2 L193 637.2"/>
</g>
<g fill="#cfcfcf">
<path d="M636.4 626.4 L639.4 629 H633.4 Z"/>
<rect x="632" y="630" width="9" height="1"/><rect x="632" y="632" width="9" height="1"/><rect x="632" y="634" width="9" height="1"/><rect x="632" y="636" width="9" height="1"/>
<path d="M684.2 627 H693.2 V634 H688 L686 636.6 V634 H684.2 Z"/>
</g>
<rect x="748" y="624" width="26.3" height="16" fill="#4e4e4e"/>
<rect x="756.6" y="627.6" width="9.6" height="9.4" fill="none" stroke="#ececec" stroke-width="1.2"/>
<rect x="756.6" y="627.6" width="2.4" height="9.4" fill="#ececec"/>
<rect x="759.6" y="628.4" width="6" height="3.8" fill="#4e4e4e"/><rect x="761" y="629.8" width="3.2" height="1" fill="#ececec"/>
<rect x="759.4" y="632.8" width="6.2" height="3.6" fill="#9a9a9a"/>
<g fill="#ececec">
<rect x="781" y="628" width="5" height="3.2" rx="0.8"/><rect x="787.6" y="628" width="5" height="3.2" rx="0.8"/>
<rect x="781" y="633.2" width="5" height="3.2" rx="0.8"/><rect x="787.6" y="633.2" width="5" height="3.2" rx="0.8"/>
</g>
<path d="M807.4 627.4 H817.6 V637 H807.4 Z M812.5 627.4 V637.4" fill="none" stroke="#d8d8d8" stroke-width="1.1"/>
<rect x="809" y="629" width="2" height="6.4" fill="#8a8a8a"/><rect x="814" y="629" width="2" height="6.4" fill="#8a8a8a"/>
<path d="M833.4 627.8 H843.2 V634 H833.4 Z" fill="none" stroke="#e4e4e4" stroke-width="1.2"/>
<rect x="835.6" y="629.8" width="5.4" height="1.4" fill="#9a9a9a"/>
<path d="M838.3 634.4 V636.2 M836 636.8 H840.6" stroke="#e0e0e0" stroke-width="1.1"/>
<rect x="855.8" y="631.6" width="6.2" height="1.4" fill="#e0e0e0"/>
<rect x="866.8" y="631.3" width="71" height="2.2" rx="1.1" fill="#858585"/>
<circle cx="903.3" cy="632.3" r="5.6" fill="#a9a9a9"/>
<rect x="942.9" y="631.6" width="6.3" height="1.4" fill="#e8e8e8"/><rect x="945.35" y="629.1" width="1.4" height="6.4" fill="#e8e8e8"/>
<g fill="none" stroke="#d8d8d8" stroke-width="1.1">
<rect x="997.8" y="627" width="9.6" height="10.2" rx="1"/>
</g>
<g fill="#d8d8d8">
<path d="M999.4 628.6 L1002 628.6 L999.4 631.2 Z M1005.8 628.6 L1003.2 628.6 L1005.8 631.2 Z M999.4 635.6 L1002 635.6 L999.4 633 Z M1005.8 635.6 L1003.2 635.6 L1005.8 633 Z"/>
</g>
</svg>
</body></html>
